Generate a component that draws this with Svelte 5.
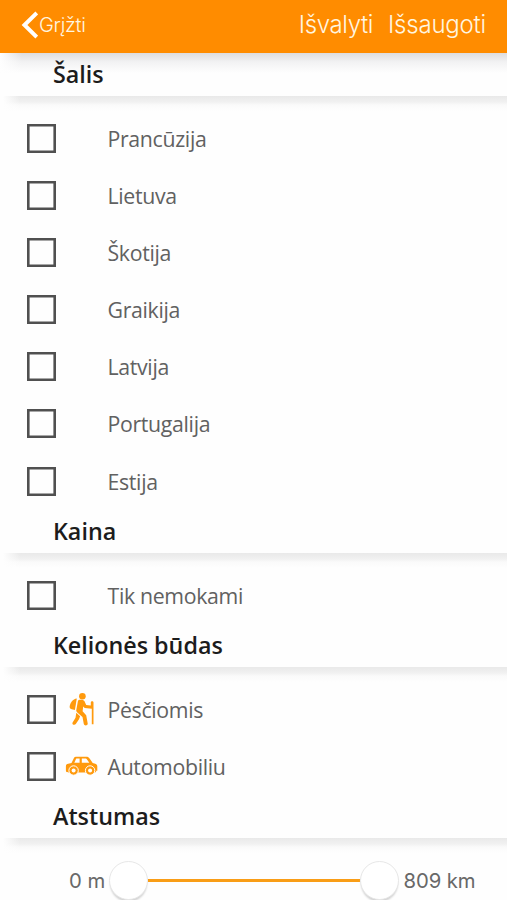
<script>
  const sections = [
    { title: 'Šalis', items: ['Prancūzija', 'Lietuva', 'Škotija', 'Graikija', 'Latvija', 'Portugalija', 'Estija'].map((label) => ({ label })) },
    { title: 'Kaina', items: [{ label: 'Tik nemokami' }] },
    { title: 'Kelionės būdas', items: [{ label: 'Pėsčiomis', icon: 'hike' }, { label: 'Automobiliu', icon: 'car' }] }
  ];
</script>

<div class="screen">
  <header>
    <button class="back">
      <svg width="18" height="30" viewBox="0 0 18 30"><path d="M16.8 3 4.5 15 16.8 27" fill="none" stroke="#fff" stroke-width="4" /></svg>
      <span>Grįžti</span>
    </button>
    <div class="actions"><button>Išvalyti</button><button class="save">Išsaugoti</button></div>
  </header>

  {#each sections as section}
    <h2>{section.title}</h2>
    <div class="list">
      {#each section.items as item}
        <div class="row">
          <span class="box"></span>
          <span class="icon">
            {#if item.icon === 'hike'}
              <svg width="32" height="34" viewBox="0 0 32 34" fill="#ff9a0d">
                <circle cx="17.4" cy="4.2" r="3.3" />
                <path d="M11.8 6.4C8 6.6 4.6 11.2 4.6 15c0 1.2 1.1 1.9 2.2 2.2l3.1.7z" />
                <path d="M13.6 7.9c1.4-.5 5-.3 5.8 1l1.8 4 4.6.6v-2.9c0-1.8 2.7-1.8 2.7 0v21.6h-1.7V16.8l-7.1-.7-1.5-1.6-.6 4.7 3.6 4 1.5 8.3c.3 2.2-3.4 2.7-3.9.6l-1.3-7-5.2-4.6c-.8-.8-1.2-1.5-1-2.6l1.4-7.6c.2-1.1.3-2 .9-2.4z" />
                <path d="m11.3 20.8 3.8 3.5-1.1 3-3.2 4.7c-1.3 1.8-4.3.3-3.2-1.6l2.9-4.7z" />
              </svg>
            {:else if item.icon === 'car'}
              <svg width="34" height="22" viewBox="0 0 34 22">
                <path fill="#ff9a0d" fill-rule="evenodd" d="M10.7 1.7h10.2c1.7 0 2.8.4 3.7 1.7l3.1 4.5 2.6.8c1.4.4 2 1.4 2 2.8v4.2h-1.2c.4 1.6-.6 1.8-2 1.8H4.8c-3.3 0-3.9-.6-3.9-2.2v-3.9c0-1.5.8-2.4 2.3-2.6l3.3-.8 2.2-4.5c.4-1 1-1.8 2-1.8zM11 3.9 9.3 7.8h5.3V3.5h-2.8c-.4 0-.6 0-.8.4zm5.8-.4v4.3h7.5L22 4.4c-.4-.6-.7-.9-1.4-.9z" />
                <g fill="#ff9a0d" stroke="#fff" stroke-width="1"><circle cx="8.6" cy="15.5" r="4.7" /><circle cx="25.1" cy="15.5" r="4.7" /></g>
                <g fill="#fff"><circle cx="8.6" cy="15.5" r="2" /><circle cx="25.1" cy="15.5" r="2" /></g>
              </svg>
            {/if}
          </span>
          <span class="label">{item.label}</span>
        </div>
      {/each}
    </div>
  {/each}

  <h2>Atstumas</h2>
  <div class="range">
    <span class="min">0 m</span>
    <div class="slider"><i class="thumb"></i><i class="track"></i><i class="thumb"></i></div>
    <span class="max">809 km</span>
  </div>
</div>

<style>
  :global(body) { margin: 0; background: #fefefe; }
  .screen { width: 507px; height: 900px; overflow: hidden; background: #fefefe; font-family: "Open Sans", sans-serif; }
  button { border: 0; padding: 0; background: none; color: #fff6e0; font: 24px Inter, sans-serif; }
  header { box-sizing: border-box; height: 53px; padding: 0 21px 4px 20px; display: flex; align-items: center; justify-content: space-between; background: #ff8c00; }
  .back { display: flex; align-items: center; font-size: 20px; font-weight: 300; letter-spacing: -.3px; gap: 1px; }
  .actions { display: flex; gap: 15px; padding-bottom: 1px; }
  .actions button { font-weight: 350; letter-spacing: -.37px; }
  .actions .save { letter-spacing: -.2px; }
  h2 { box-sizing: border-box; height: 43px; margin: 0; padding-left: 53px; font-size: 23.3px; line-height: 43px; font-weight: 600; color: #1c1c1c; }
  header + h2 { background: linear-gradient(90deg, #fefefe, #fefefe00 22px), linear-gradient(#dedddf, #f2f2f3 9px, #fefefe 20px); }
  .list { padding-top: 14px; }
  .list, .range { background: linear-gradient(90deg, #fefefe 3px, #fefefe00 20px) 0 0 / 100% 15px no-repeat, linear-gradient(#e9e9e9, #f1f1f1 6px, #fafafa 9px, #fefefe 15px) 0 0 / 100% 15px no-repeat; }
  .row { height: 57.09px; display: flex; align-items: center; }
  .box { width: 29px; height: 29px; margin-left: 26.5px; box-shadow: inset 0 0 0 2.6px #505050; }
  .icon { width: 52px; display: flex; padding-left: 9px; box-sizing: border-box; }
  .label { font-size: 21.3px; letter-spacing: -.33px; color: #616161; }
  .range { height: 86px; box-sizing: border-box; display: flex; align-items: center; color: #686868; font: 20.3px Inter, sans-serif; }
  .min { width: 109px; box-sizing: border-box; padding-left: 69px; white-space: nowrap; }
  .slider { width: 289.5px; display: flex; align-items: center; }
  .track { flex: 1; height: 3px; background: #f99d16; }
  .thumb { box-sizing: border-box; width: 39px; height: 39px; border: 1px solid #e7e7e7; border-radius: 50%; background: #fff; box-shadow: 0 3px 2px -1px #d2d2d2; }
  .max { padding-left: 5px; white-space: nowrap; letter-spacing: -.1px; }
</style>
